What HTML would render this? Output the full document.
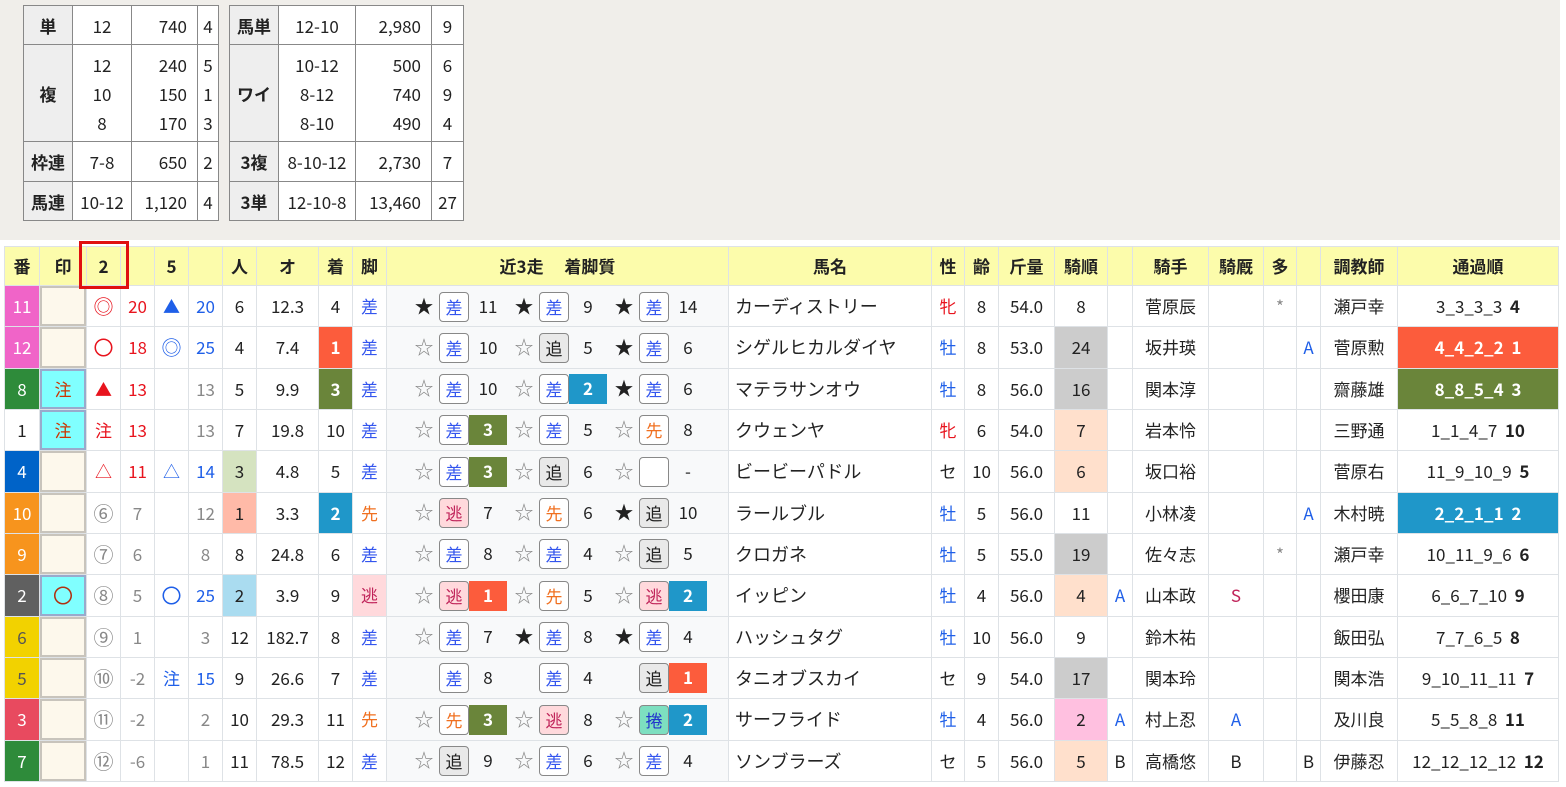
<!DOCTYPE html>
<html><head><meta charset="utf-8">
<style>
*{box-sizing:border-box;margin:0;padding:0}
body{width:1566px;height:787px;background:#fff;font-family:"Noto Sans CJK JP","Liberation Sans",sans-serif;font-size:17px;color:#222;position:relative;overflow:hidden}
#top{position:absolute;left:0;top:0;width:1560px;height:240px;background:#f0eeea}
.pt{position:absolute;top:5px;border-collapse:collapse;background:#fff;table-layout:fixed}
.pt td{border:1px solid #888;text-align:center;height:39px;line-height:29px}
.pt th{border:1px solid #888;background:#eee;font-weight:bold;height:39px}
.pt .r{text-align:right;padding-right:10px}
#m{position:absolute;left:4px;top:246px;border-collapse:collapse;table-layout:fixed;width:1554px}
#m td,#m th{border:1px solid #dee2e6;text-align:center;height:41.33px;padding:0;white-space:nowrap;overflow:hidden;line-height:24px}
#m th{background:#fcfcab;height:39px;font-weight:bold}
.rc{background:#f8f9fa;position:relative}
.rc i,.rc b,.rc u{position:absolute;font-style:normal;text-decoration:none;font-weight:normal;top:5.5px;height:30px;line-height:28px;text-align:center}
.rc i{width:20px;font-size:19px}
.rc i.w{color:#888}
.rc b{width:30px;border:1px solid #888;border-radius:4px;background:#fff}
.rc u{width:38px}
.s1{left:27px}.s2{left:127px}.s3{left:227px}
.b1{left:52px}.b2{left:152px}.b3{left:252px}
.n1{left:82px}.n2{left:182px}.n3{left:282px}
.sa{color:#3355ee}.ni{background:#ffd9dc!important;color:#c0245a}.ok{background:#e9e9e9!important}.se{color:#f07020}.mk{background:#7ddfc0!important;color:#2233cc}
.g1{background:#fc5c3c;color:#fff;font-weight:bold!important}.g2{background:#1f97c9;color:#fff;font-weight:bold!important}.g3{background:#6a853a;color:#fff;font-weight:bold!important}
.f{color:#fff}
.ins{background:#fdf8ec;box-shadow:inset 0 0 0 2px #c8c4bc}
.cy{background:#80ffff;box-shadow:inset 0 0 0 2px #9ac;color:#cc3300}
.red{color:#e8141e}.blu{color:#1f5fe8}.gr{color:#888}
.big{font-size:20px}
.nm{text-align:left!important;padding-left:6px!important;font-size:18px}
.bold{font-weight:bold}
#box{position:absolute;left:79px;top:241px;width:50px;height:48px;border:3px solid #e01010}
</style></head><body>
<div id="top"></div>
<table class="pt" style="left:23px;width:195px">
<colgroup><col style="width:49px"><col style="width:59px"><col style="width:66px"><col style="width:21px"></colgroup>
<tr><th>単</th><td>12</td><td class="r">740</td><td>4</td></tr>
<tr><th style="height:97px">複</th><td>12<br>10<br>8</td><td class="r">240<br>150<br>170</td><td>5<br>1<br>3</td></tr>
<tr><th style="height:40px">枠連</th><td>7-8</td><td class="r">650</td><td>2</td></tr>
<tr><th>馬連</th><td>10-12</td><td class="r">1,120</td><td>4</td></tr>
</table>
<table class="pt" style="left:229px;width:234px">
<colgroup><col style="width:49px"><col style="width:77px"><col style="width:76px"><col style="width:32px"></colgroup>
<tr><th>馬単</th><td>12-10</td><td class="r">2,980</td><td>9</td></tr>
<tr><th style="height:97px">ワイ</th><td>10-12<br>8-12<br>8-10</td><td class="r">500<br>740<br>490</td><td>6<br>9<br>4</td></tr>
<tr><th style="height:40px">3複</th><td>8-10-12</td><td class="r">2,730</td><td>7</td></tr>
<tr><th>3単</th><td>12-10-8</td><td class="r">13,460</td><td>27</td></tr>
</table>

<table id="m">
<colgroup><col style="width:35px"><col style="width:47px"><col style="width:34px"><col style="width:34px"><col style="width:34px"><col style="width:34px"><col style="width:34px"><col style="width:62px"><col style="width:34px"><col style="width:34px"><col style="width:342px"><col style="width:203px"><col style="width:33px"><col style="width:34px"><col style="width:56px"><col style="width:53px"><col style="width:25px"><col style="width:76px"><col style="width:55px"><col style="width:33px"><col style="width:24px"><col style="width:77px"><col style="width:161px"></colgroup>
<tr><th>番</th><th>印</th><th>2</th><th></th><th>5</th><th></th><th>人</th><th>オ</th><th>着</th><th>脚</th><th>近3走　 着脚質</th><th>馬名</th><th>性</th><th>齢</th><th>斤量</th><th>騎順</th><th></th><th>騎手</th><th>騎厩</th><th>多</th><th></th><th>調教師</th><th>通過順</th></tr>

<tr><td class="f" style="background:#f064c8">11</td><td class="ins"></td><td class="red big">◎</td><td class="red">20</td><td class="blu">▲</td><td class="blu">20</td><td>6</td><td>12.3</td><td>4</td><td class="sa">差</td>
<td class="rc"><i class="s1">★</i><b class="b1 sa">差</b><u class="n1">11</u><i class="s2">★</i><b class="b2 sa">差</b><u class="n2">9</u><i class="s3">★</i><b class="b3 sa">差</b><u class="n3">14</u></td>
<td class="nm">カーディストリー</td><td class="red">牝</td><td>8</td><td>54.0</td><td>8</td><td></td><td>菅原辰</td><td></td><td class="gr">*</td><td></td><td>瀬戸幸</td><td>3_3_3_3&nbsp; <span class="bold">4</span></td></tr>

<tr><td class="f" style="background:#f064c8">12</td><td class="ins"></td><td class="red big">〇</td><td class="red">18</td><td class="blu big">◎</td><td class="blu">25</td><td>4</td><td>7.4</td><td class="g1">1</td><td class="sa">差</td>
<td class="rc"><i class="s1 w">☆</i><b class="b1 sa">差</b><u class="n1">10</u><i class="s2 w">☆</i><b class="b2 ok">追</b><u class="n2">5</u><i class="s3">★</i><b class="b3 sa">差</b><u class="n3">6</u></td>
<td class="nm">シゲルヒカルダイヤ</td><td class="blu">牡</td><td>8</td><td>53.0</td><td style="background:#ccc">24</td><td></td><td>坂井瑛</td><td></td><td></td><td class="blu">A</td><td>菅原勲</td><td class="g1">4_4_2_2&nbsp; 1</td></tr>

<tr><td class="f" style="background:#2e8b3a">8</td><td class="cy">注</td><td class="red">▲</td><td class="red">13</td><td></td><td class="gr">13</td><td>5</td><td>9.9</td><td class="g3">3</td><td class="sa">差</td>
<td class="rc"><i class="s1 w">☆</i><b class="b1 sa">差</b><u class="n1">10</u><i class="s2 w">☆</i><b class="b2 sa">差</b><u class="n2 g2">2</u><i class="s3">★</i><b class="b3 sa">差</b><u class="n3">6</u></td>
<td class="nm">マテラサンオウ</td><td class="blu">牡</td><td>8</td><td>56.0</td><td style="background:#ccc">16</td><td></td><td>関本淳</td><td></td><td></td><td></td><td>齋藤雄</td><td class="g3">8_8_5_4&nbsp; 3</td></tr>

<tr><td>1</td><td class="cy">注</td><td class="red">注</td><td class="red">13</td><td></td><td class="gr">13</td><td>7</td><td>19.8</td><td>10</td><td class="sa">差</td>
<td class="rc"><i class="s1 w">☆</i><b class="b1 sa">差</b><u class="n1 g3">3</u><i class="s2 w">☆</i><b class="b2 sa">差</b><u class="n2">5</u><i class="s3 w">☆</i><b class="b3 se">先</b><u class="n3">8</u></td>
<td class="nm">クウェンヤ</td><td class="red">牝</td><td>6</td><td>54.0</td><td style="background:#ffe0cc">7</td><td></td><td>岩本怜</td><td></td><td></td><td></td><td>三野通</td><td>1_1_4_7&nbsp; <span class="bold">10</span></td></tr>

<tr><td class="f" style="background:#0063c8">4</td><td class="ins"></td><td class="red">△</td><td class="red">11</td><td class="blu">△</td><td class="blu">14</td><td style="background:#d5e3c0">3</td><td>4.8</td><td>5</td><td class="sa">差</td>
<td class="rc"><i class="s1 w">☆</i><b class="b1 sa">差</b><u class="n1 g3">3</u><i class="s2 w">☆</i><b class="b2 ok">追</b><u class="n2">6</u><i class="s3 w">☆</i><b class="b3"></b><u class="n3">-</u></td>
<td class="nm">ビービーパドル</td><td>セ</td><td>10</td><td>56.0</td><td style="background:#ffe0cc">6</td><td></td><td>坂口裕</td><td></td><td></td><td></td><td>菅原右</td><td>11_9_10_9&nbsp; <span class="bold">5</span></td></tr>

<tr><td class="f" style="background:#f7941d">10</td><td class="ins"></td><td class="gr big">⑥</td><td class="gr">7</td><td></td><td class="gr">12</td><td style="background:#ffbaa8">1</td><td>3.3</td><td class="g2">2</td><td class="se">先</td>
<td class="rc"><i class="s1 w">☆</i><b class="b1 ni">逃</b><u class="n1">7</u><i class="s2 w">☆</i><b class="b2 se">先</b><u class="n2">6</u><i class="s3">★</i><b class="b3 ok">追</b><u class="n3">10</u></td>
<td class="nm">ラールブル</td><td class="blu">牡</td><td>5</td><td>56.0</td><td>11</td><td></td><td>小林凌</td><td></td><td></td><td class="blu">A</td><td>木村暁</td><td class="g2">2_2_1_1&nbsp; 2</td></tr>

<tr><td class="f" style="background:#f7941d">9</td><td class="ins"></td><td class="gr big">⑦</td><td class="gr">6</td><td></td><td class="gr">8</td><td>8</td><td>24.8</td><td>6</td><td class="sa">差</td>
<td class="rc"><i class="s1 w">☆</i><b class="b1 sa">差</b><u class="n1">8</u><i class="s2 w">☆</i><b class="b2 sa">差</b><u class="n2">4</u><i class="s3 w">☆</i><b class="b3 ok">追</b><u class="n3">5</u></td>
<td class="nm">クロガネ</td><td class="blu">牡</td><td>5</td><td>55.0</td><td style="background:#ccc">19</td><td></td><td>佐々志</td><td></td><td class="gr">*</td><td></td><td>瀬戸幸</td><td>10_11_9_6&nbsp; <span class="bold">6</span></td></tr>

<tr><td class="f" style="background:#606060">2</td><td class="cy big" style="color:#b03010">〇</td><td class="gr big">⑧</td><td class="gr">5</td><td class="blu big">〇</td><td class="blu">25</td><td style="background:#aadcf0">2</td><td>3.9</td><td>9</td><td class="ni" style="background:#ffdde2">逃</td>
<td class="rc"><i class="s1 w">☆</i><b class="b1 ni">逃</b><u class="n1 g1">1</u><i class="s2 w">☆</i><b class="b2 se">先</b><u class="n2">5</u><i class="s3 w">☆</i><b class="b3 ni">逃</b><u class="n3 g2">2</u></td>
<td class="nm">イッピン</td><td class="blu">牡</td><td>4</td><td>56.0</td><td style="background:#ffe0cc">4</td><td class="blu">A</td><td>山本政</td><td style="color:#c0245a">S</td><td></td><td></td><td>櫻田康</td><td>6_6_7_10&nbsp; <span class="bold">9</span></td></tr>

<tr><td style="background:#f2d200;color:#555">6</td><td class="ins"></td><td class="gr big">⑨</td><td class="gr">1</td><td></td><td class="gr">3</td><td>12</td><td>182.7</td><td>8</td><td class="sa">差</td>
<td class="rc"><i class="s1 w">☆</i><b class="b1 sa">差</b><u class="n1">7</u><i class="s2">★</i><b class="b2 sa">差</b><u class="n2">8</u><i class="s3">★</i><b class="b3 sa">差</b><u class="n3">4</u></td>
<td class="nm">ハッシュタグ</td><td class="blu">牡</td><td>10</td><td>56.0</td><td>9</td><td></td><td>鈴木祐</td><td></td><td></td><td></td><td>飯田弘</td><td>7_7_6_5&nbsp; <span class="bold">8</span></td></tr>

<tr><td style="background:#f2d200;color:#555">5</td><td class="ins"></td><td class="gr big">⑩</td><td class="gr">-2</td><td class="blu">注</td><td class="blu">15</td><td>9</td><td>26.6</td><td>7</td><td class="sa">差</td>
<td class="rc"><b class="b1 sa">差</b><u class="n1">8</u><b class="b2 sa">差</b><u class="n2">4</u><b class="b3 ok">追</b><u class="n3 g1">1</u></td>
<td class="nm">タニオブスカイ</td><td>セ</td><td>9</td><td>54.0</td><td style="background:#ccc">17</td><td></td><td>関本玲</td><td></td><td></td><td></td><td>関本浩</td><td>9_10_11_11&nbsp; <span class="bold">7</span></td></tr>

<tr><td class="f" style="background:#e84a5f">3</td><td class="ins"></td><td class="gr big">⑪</td><td class="gr">-2</td><td></td><td class="gr">2</td><td>10</td><td>29.3</td><td>11</td><td class="se">先</td>
<td class="rc"><i class="s1 w">☆</i><b class="b1 se">先</b><u class="n1 g3">3</u><i class="s2 w">☆</i><b class="b2 ni">逃</b><u class="n2">8</u><i class="s3 w">☆</i><b class="b3 mk">捲</b><u class="n3 g2">2</u></td>
<td class="nm">サーフライド</td><td class="blu">牡</td><td>4</td><td>56.0</td><td style="background:#ffc0e0">2</td><td class="blu">A</td><td>村上忍</td><td class="blu">A</td><td></td><td></td><td>及川良</td><td>5_5_8_8&nbsp; <span class="bold">11</span></td></tr>

<tr><td class="f" style="background:#2e8b3a">7</td><td class="ins"></td><td class="gr big">⑫</td><td class="gr">-6</td><td></td><td class="gr">1</td><td>11</td><td>78.5</td><td>12</td><td class="sa">差</td>
<td class="rc"><i class="s1 w">☆</i><b class="b1 ok">追</b><u class="n1">9</u><i class="s2 w">☆</i><b class="b2 sa">差</b><u class="n2">6</u><i class="s3 w">☆</i><b class="b3 sa">差</b><u class="n3">4</u></td>
<td class="nm">ソンブラーズ</td><td>セ</td><td>5</td><td>56.0</td><td style="background:#ffe0cc">5</td><td>B</td><td>高橋悠</td><td>B</td><td></td><td>B</td><td>伊藤忍</td><td>12_12_12_12&nbsp; <span class="bold">12</span></td></tr>
</table>
<div id="box"></div>
</body></html>
